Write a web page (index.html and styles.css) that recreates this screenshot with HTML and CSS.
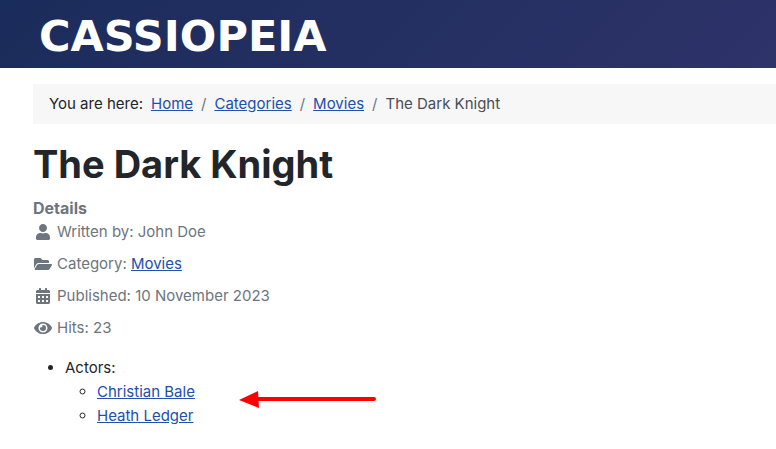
FILE: index.html
```
<!DOCTYPE html>
<html lang="en">
  <head>
    <meta charset="UTF-8" />
    <meta name="viewport" content="width=device-width, initial-scale=1.0" />
    <title>The Dark Knight</title>
    <link rel="stylesheet" href="styles.css">
  </head>
  <body>
    <header class="header">
      <a class="brand" href="#">CASSIOPEIA</a>
    </header>
    <div class="site">
      <nav class="breadcrumbs" aria-label="Breadcrumbs">
        <span class="here">You are here:</span>
        <ol class="breadcrumb">
          <li><a href="#">Home</a></li>
          <li><a href="#">Categories</a></li>
          <li><a href="#">Movies</a></li>
          <li class="active">The Dark Knight</li>
        </ol>
      </nav>
      <main class="article">
        <h1>The Dark Knight</h1>
        <dl class="info">
          <dt>Details</dt>
          <dd>
            <svg class="icon" viewBox="-96 0 640 512" aria-hidden="true"><path d="M224 256c70.700 0 128-57.300 128-128S294.700 0 224 0 96 57.300 96 128s57.300 128 128 128zm89.600 32h-16.700c-22.200 10.200-46.900 16-72.900 16s-50.600-5.800-72.900-16h-16.700C60.200 288 0 348.200 0 422.400V464c0 26.500 21.500 48 48 48h352c26.500 0 48-21.500 48-48v-41.600c0-74.200-60.200-134.400-134.400-134.400z"/></svg>
            <span>Written by: John Doe</span>
          </dd>
          <dd>
            <svg class="icon" viewBox="-32 0 640 512" aria-hidden="true"><path d="M572.700 292.100L500.300 416.200A64 64 0 0 1 445 448H45c-18.500 0-30.100-20.100-20.700-36.100l72.400-124.100A64 64 0 0 1 152 256h400c18.500 0 30 20.100 20.700 36.100zM152 224h328v-48c0-26.500-21.500-48-48-48H272l-64-64H48C21.500 64 0 85.500 0 112v278l69.100-118.400C86.200 242.200 118 224 152 224z"/></svg>
            <span>Category: <a href="#">Movies</a></span>
          </dd>
          <dd>
            <svg class="icon" viewBox="-96 0 640 512" aria-hidden="true"><path d="M0 464c0 26.500 21.500 48 48 48h352c26.500 0 48-21.500 48-48V192H0v272zm320-196c0-6.600 5.400-12 12-12h40c6.600 0 12 5.400 12 12v40c0 6.600-5.400 12-12 12h-40c-6.600 0-12-5.400-12-12v-40zm0 128c0-6.600 5.400-12 12-12h40c6.600 0 12 5.400 12 12v40c0 6.600-5.400 12-12 12h-40c-6.600 0-12-5.400-12-12v-40zM192 268c0-6.600 5.400-12 12-12h40c6.600 0 12 5.400 12 12v40c0 6.600-5.400 12-12 12h-40c-6.600 0-12-5.400-12-12v-40zm0 128c0-6.600 5.400-12 12-12h40c6.600 0 12 5.400 12 12v40c0 6.600-5.400 12-12 12h-40c-6.600 0-12-5.400-12-12v-40zM64 268c0-6.600 5.400-12 12-12h40c6.600 0 12 5.400 12 12v40c0 6.600-5.400 12-12 12H76c-6.600 0-12-5.400-12-12v-40zm0 128c0-6.600 5.400-12 12-12h40c6.600 0 12 5.400 12 12v40c0 6.600-5.400 12-12 12H76c-6.600 0-12-5.400-12-12v-40zM400 64h-48V16c0-8.800-7.200-16-16-16h-32c-8.800 0-16 7.200-16 16v48H160V16c0-8.800-7.200-16-16-16h-32c-8.800 0-16 7.200-16 16v48H48C21.500 64 0 85.500 0 112v48h448v-48c0-26.500-21.500-48-48-48z"/></svg>
            <span>Published: <time datetime="2023-11-10">10 November 2023</time></span>
          </dd>
          <dd>
            <svg class="icon" viewBox="-32 0 640 512" aria-hidden="true"><path d="M572.500 241.400C518.300 135.600 410.900 64 288 64S57.700 135.600 3.500 241.400a32.400 32.400 0 0 0 0 29.200C57.700 376.400 165.100 448 288 448s230.300-71.600 284.500-177.400a32.400 32.400 0 0 0 0-29.200zM288 400a144 144 0 1 1 144-144 143.900 143.900 0 0 1-144 144zm0-240a95.300 95.300 0 0 0-25.300 3.800 47.900 47.900 0 0 1-66.900 66.900A95.800 95.800 0 1 0 288 160z"/></svg>
            <span>Hits: 23</span>
          </dd>
        </dl>
        <ul class="fields">
          <li>Actors:
            <ul>
              <li><a href="#">Christian Bale</a></li>
              <li class="last">
                <a href="#">Heath Ledger</a>
                <svg class="arrow" viewBox="0 0 138 18" aria-hidden="true"><path d="M18 9H135" fill="none" stroke="#f00" stroke-width="4" stroke-linecap="round"/><path d="M0 10L19 1L20 18z" fill="#f00"/></svg>
              </li>
            </ul>
          </li>
        </ul>
      </main>
    </div>
  </body>
</html>
```
FILE: styles.css
```
* {
    box-sizing: border-box;
}
body {
    margin: 0;
    font-family: Inter, "Liberation Sans", sans-serif;
    font-size: 15px;
    line-height: 24px;
    color: #22262a;
    background-color: #fff;
}
a {
    color: #224faa;
}
.header {
    display: flex;
    align-items: center;
    padding: 12px 39px 8px;
    background-image: linear-gradient(135deg, #1a2c5b 0%, #2e3368 100%);
}
.brand {
    font-family: "DejaVu Sans", sans-serif;
    font-size: 43px;
    font-weight: 700;
    line-height: 48px;
    color: #fff;
    text-decoration: none;
}
.site {
    padding: 16px 0 16px 33px;
}
.breadcrumbs {
    display: flex;
    gap: 8px;
    padding: 8px 16px;
    background-color: #f7f7f7;
}
.breadcrumb {
    display: flex;
    margin: 0;
    padding: 0;
    list-style: none;
}
.breadcrumb li + li::before {
    content: "/";
    padding: 0 8px;
    color: #6d757e;
}
.breadcrumb .active {
    color: #484f56;
}
h1 {
    margin: 16px 0 8px;
    font-size: 38px;
    line-height: 48px;
    font-weight: 700;
}
.info {
    margin: 0;
    color: #6d757e;
}
.info dt {
    font-size: 16px;
    font-weight: 700;
}
.info dd {
    display: flex;
    align-items: center;
    gap: 4px;
    margin: 0 0 8px;
}
.icon {
    width: 20px;
    height: 16px;
    fill: currentColor;
}
.fields {
    margin: 16px 0;
    padding-left: 32px;
}
.fields ul {
    margin: 0;
    padding-left: 32px;
}
.last {
    position: relative;
}
/* pointer laid over the list */
.arrow {
    position: absolute;
    left: 142px;
    top: -14px;
    width: 138px;
    height: 18px;
}
```
